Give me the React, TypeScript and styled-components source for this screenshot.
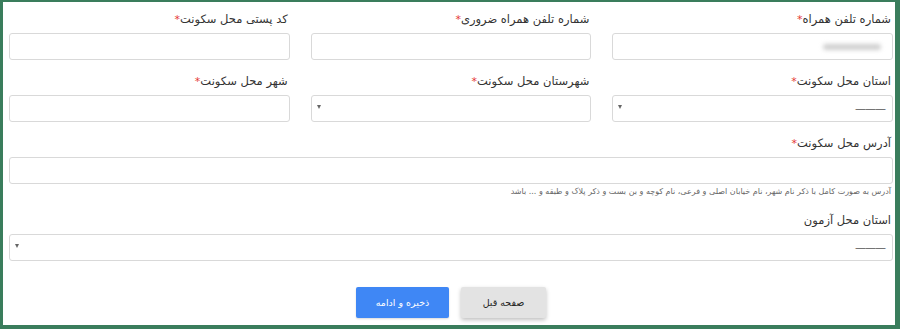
import styled, { createGlobalStyle } from 'styled-components';

const GlobalStyle = createGlobalStyle`
  html, body {
    margin: 0;
    padding: 0;
    background: #fff;
  }
  * {
    box-sizing: border-box;
  }
`;

const Frame = styled.div`
  width: 900px;
  height: 329px;
  border-style: solid;
  border-color: #3a7d5c;
  border-width: 2px 5px 4px 3px;
  background: #fff;
  direction: rtl;
  font-family: Tahoma, 'DejaVu Sans', sans-serif;
  color: #333;
  padding: 8px 2px 0 6px;
`;

const Grid = styled.div`
  display: grid;
  grid-template-columns: repeat(3, 1fr);
  column-gap: 21px;
  row-gap: 12px;
`;

const Field = styled.div<{ full?: boolean }>`
  display: flex;
  flex-direction: column;
  ${({ full }) => full && 'grid-column: 1 / -1;'}
`;

const Label = styled.label`
  font-size: 11.5px;
  line-height: 18px;
  height: 18px;
  margin-bottom: 5px;
  padding-right: 2px;
  white-space: nowrap;
`;

const Star = styled.span`
  color: #e53935;
  font-size: 11px;
`;

const Box = styled.div`
  position: relative;
  height: 27px;
  border: 1px solid #d9d9d9;
  border-radius: 3px;
  background: #fff;
  display: flex;
  align-items: center;
  padding: 0 7px;
`;

const Dashes = styled.span`
  font-size: 11px;
  color: #555;
  letter-spacing: -1px;
`;

const Caret = styled.span`
  position: absolute;
  left: 5px;
  top: 9px;
  width: 0;
  height: 0;
  border-left: 2.5px solid transparent;
  border-right: 2.5px solid transparent;
  border-top: 4px solid #666;
`;

const Blurred = styled.span`
  display: block;
  width: 58px;
  height: 6px;
  margin-right: 4px;
  border-radius: 3px;
  background: #cfcfcf;
  filter: blur(2px);
`;

const Help = styled.div`
  font-size: 8px;
  color: #666;
  line-height: 12px;
  margin-top: 2px;
  margin-bottom: 1px;
  padding-right: 2px;
`;

const Actions = styled.div`
  display: flex;
  justify-content: center;
  gap: 12px;
  margin-top: 26px;
`;

const Button = styled.button<{ primary?: boolean }>`
  height: 31px;
  width: ${({ primary }) => (primary ? '93px' : '85px')};
  border: none;
  border-radius: 2px;
  font-family: Tahoma, 'DejaVu Sans', sans-serif;
  font-size: 9.5px;
  background: ${({ primary }) => (primary ? '#3f87f5' : '#e3e3e3')};
  color: ${({ primary }) => (primary ? '#fff' : '#222')};
  box-shadow: ${({ primary }) =>
    primary ? '0 1px 2px rgba(0,0,0,0.15)' : '0 2px 4px rgba(0,0,0,0.25)'};
`;

interface FieldProps {
  label: string;
  required?: boolean;
  select?: boolean;
  dashes?: string;
  blurred?: boolean;
  full?: boolean;
  help?: string;
}

function FormField({ label, required, select, dashes, blurred, full, help }: FieldProps) {
  return (
    <Field full={full}>
      <Label>
        {label}
        {required && <Star>*</Star>}
      </Label>
      <Box>
        {blurred && <Blurred />}
        {dashes && <Dashes>{dashes}</Dashes>}
        {select && <Caret />}
      </Box>
      {help && <Help>{help}</Help>}
    </Field>
  );
}

export default function App() {
  return (
    <>
      <GlobalStyle />
      <Frame>
        <Grid>
          <FormField label="شماره تلفن همراه" required blurred />
          <FormField label="شماره تلفن همراه ضروری" required />
          <FormField label="کد پستی محل سکونت" required />
          <FormField label="استان محل سکونت" required select dashes="———" />
          <FormField label="شهرستان محل سکونت" required select />
          <FormField label="شهر محل سکونت" required />
          <FormField
            label="آدرس محل سکونت"
            required
            full
            help="آدرس به صورت کامل با ذکر نام شهر، نام خیابان اصلی و فرعی، نام کوچه و بن بست و ذکر پلاک و طبقه و ... باشد"
          />
          <FormField label="استان محل آزمون" select full dashes="———" />
        </Grid>
        <Actions>
          <Button>صفحه قبل</Button>
          <Button primary>ذخیره و ادامه</Button>
        </Actions>
      </Frame>
    </>
  );
}
